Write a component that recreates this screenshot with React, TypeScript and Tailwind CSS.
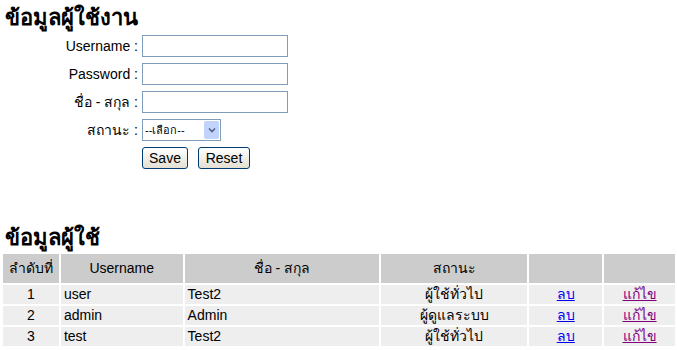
const users = [
  { no: 1, username: "user", name: "Test2", status: "ผู้ใช้ทั่วไป" },
  { no: 2, username: "admin", name: "Admin", status: "ผู้ดูแลระบบ" },
  { no: 3, username: "test", name: "Test2", status: "ผู้ใช้ทั่วไป" },
];

const font = "font-['Tahoma','Liberation_Sans','DejaVu_Sans','Noto_Sans',sans-serif]";

function Field({ label }: { label: string }) {
  return (
    <>
      <span className="text-right leading-[22px]">{label} :</span>
      <input
        type="text"
        className="h-[22px] w-[146px] border border-[#7f9db9] bg-white outline-none"
      />
    </>
  );
}

function XpButton({ children, w }: { children: string; w: string }) {
  return (
    <button
      className={`${w} h-[22px] rounded-[3px] border border-[#003c74] bg-gradient-to-b from-white to-[#e3e0d2] text-[14px] leading-none text-black`}
    >
      {children}
    </button>
  );
}

export default function App() {
  return (
    <div className={`${font} min-h-[350px] w-[677px] bg-white text-[14px] text-black`}>
      <h1 className="pl-[5px] pt-[5px] text-[22px] font-bold leading-[26px]">ข้อมูลผู้ใช้งาน</h1>

      <div className="mt-[4px] grid grid-cols-[138px_auto] items-center gap-x-[4px] gap-y-[6px]">
        <Field label="Username" />
        <Field label="Password" />
        <Field label="ชื่อ - สกุล" />
        <span className="text-right leading-[22px]">สถานะ :</span>
        <div className="flex h-[22px] w-[79px] items-center border border-[#7f9db9] bg-white">
          <span className="flex-1 pl-[2px] text-[11px]">--เลือก--</span>
          <span className="mr-[1px] flex h-[18px] w-[15px] items-center justify-center rounded-[2px] bg-[#c1d3fb]">
            <svg width="8" height="6" viewBox="0 0 8 6">
              <path d="M1 1.5 L4 4.5 L7 1.5" stroke="#4d6185" strokeWidth="1.6" fill="none" />
            </svg>
          </span>
        </div>
        <span />
        <div className="flex gap-[10px]">
          <XpButton w="w-[46px]">Save</XpButton>
          <XpButton w="w-[52px]">Reset</XpButton>
        </div>
      </div>

      <h2 className="mt-[56px] pl-[5px] text-[22px] font-bold leading-[26px]">ข้อมูลผู้ใช้</h2>

      <table className="ml-[1px] mt-[1px] w-[676px] border-separate border-spacing-[2px] text-[14px]">
        <thead>
          <tr className="bg-[#cccccc]">
            <th className="h-[29px] w-[56px] font-normal">ลำดับที่</th>
            <th className="w-[122px] font-normal">Username</th>
            <th className="w-[195px] font-normal">ชื่อ - สกุล</th>
            <th className="w-[147px] font-normal">สถานะ</th>
            <th className="w-[73px] font-normal"></th>
            <th className="w-[71px] font-normal"></th>
          </tr>
        </thead>
        <tbody>
          {users.map((u) => (
            <tr key={u.no} className="h-[19px] bg-[#eeeeee] leading-[17px]">
              <td className="text-center">{u.no}</td>
              <td className="pl-[3px]">{u.username}</td>
              <td className="pl-[3px]">{u.name}</td>
              <td className="text-center">{u.status}</td>
              <td className="text-center">
                <a href="#" className="text-[#0000ee] underline">ลบ</a>
              </td>
              <td className="text-center">
                <a href="#" className="text-[#800080] underline">แก้ไข</a>
              </td>
            </tr>
          ))}
        </tbody>
      </table>
    </div>
  );
}
